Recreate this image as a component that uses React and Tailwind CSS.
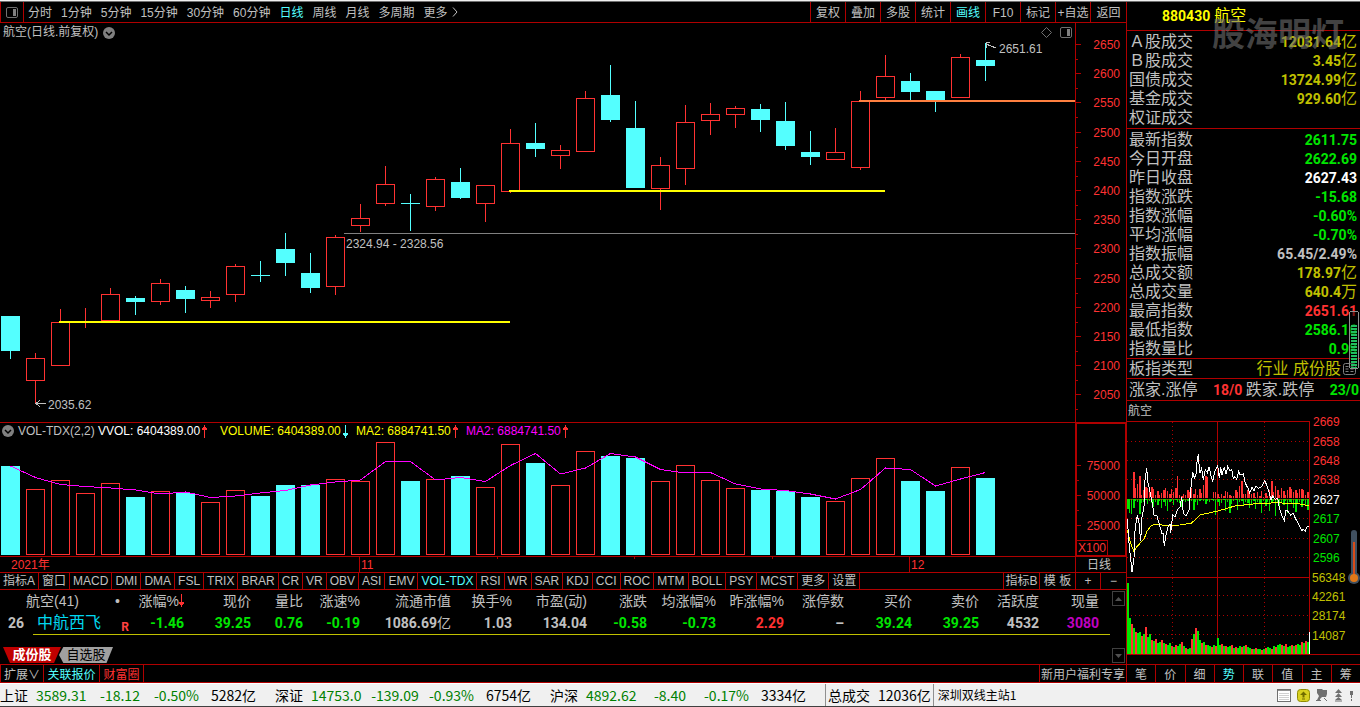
import { useState } from "react"

const periods = ["分时", "1分钟", "5分钟", "15分钟", "30分钟", "60分钟", "日线", "周线", "月线", "多周期", "更多"]
const tools = ["复权", "叠加", "多股", "统计", "画线", "F10", "标记", "+自选", "返回"]
const indicators = ["指标A", "窗口", "MACD", "DMI", "DMA", "FSL", "TRIX", "BRAR", "CR", "VR", "OBV", "ASI", "EMV", "VOL-TDX", "RSI", "WR", "SAR", "KDJ", "CCI", "ROC", "MTM", "BOLL", "PSY", "MCST", "更多", "设置"]
const sideTabs = ["笔", "价", "细", "势", "联", "值", "主", "筹"]

// [up, high, open/close top, open/close bottom, low, volume top]
const candles = [
  [0, 316, 316, 351, 359, 466],
  [1, 353, 358, 381, 403, 489],
  [1, 309, 322, 366, 366, 480],
  [1, 308, 321, 323, 328, 493],
  [1, 288, 294, 321, 321, 483],
  [0, 296, 298, 302, 315, 497],
  [1, 279, 283, 302, 305, 491],
  [0, 286, 290, 299, 313, 493],
  [1, 291, 297, 301, 308, 502],
  [1, 264, 266, 295, 302, 490],
  [0, 261, 275, 276, 282, 496],
  [0, 233, 249, 263, 276, 485],
  [0, 253, 273, 288, 293, 485],
  [1, 235, 237, 287, 295, 479],
  [1, 204, 218, 226, 232, 481],
  [1, 166, 184, 204, 206, 442],
  [0, 194, 203, 204, 231, 481],
  [1, 177, 179, 207, 211, 479],
  [0, 168, 182, 198, 199, 476],
  [1, 185, 185, 204, 222, 487],
  [1, 129, 143, 192, 193, 444],
  [0, 123, 143, 149, 157, 463],
  [1, 145, 150, 156, 169, 485],
  [1, 91, 98, 152, 152, 451],
  [0, 65, 95, 120, 122, 456],
  [0, 101, 128, 188, 188, 458],
  [1, 157, 165, 189, 210, 481],
  [1, 105, 122, 169, 185, 465],
  [1, 103, 114, 121, 135, 480],
  [1, 106, 108, 115, 128, 488],
  [0, 104, 109, 120, 132, 490],
  [0, 102, 121, 146, 150, 491],
  [0, 131, 152, 157, 165, 497],
  [1, 128, 152, 160, 160, 501],
  [1, 91, 101, 168, 170, 478],
  [1, 55, 76, 98, 100, 458],
  [0, 73, 81, 92, 100, 481],
  [0, 91, 91, 100, 112, 491],
  [1, 54, 57, 98, 98, 467],
  [0, 43, 60, 66, 81, 478],
]

const turnover = [
  ["Ａ股成交", "12031.64", "亿"],
  ["Ｂ股成交", "3.45", "亿"],
  ["国债成交", "13724.99", "亿"],
  ["基金成交", "929.60", "亿"],
  ["权证成交", "", ""],
]
const green = "text-[#00e600]"
const red = "text-[#ff3232]"
const olive = "text-[#c0c000]"
const silver = "text-[#c0c0c0]"
const quotes = [
  ["最新指数", "2611.75", "", green],
  ["今日开盘", "2622.69", "", green],
  ["昨日收盘", "2627.43", "", "text-white"],
  ["指数涨跌", "-15.68", "", green],
  ["指数涨幅", "-0.60%", "", green],
  ["平均涨幅", "-0.70%", "", green],
  ["指数振幅", "65.45/2.49%", "", silver],
  ["总成交额", "178.97", "亿", olive],
  ["总成交量", "640.4", "万", olive],
  ["最高指数", "2651.61", "", red],
  ["最低指数", "2586.16", "", green],
  ["指数量比", "0.98", "", green],
]

const columns = [
  ["涨幅%", "-1.46", green, "w-[51px]"],
  ["现价", "39.25", green, "w-[67px]"],
  ["量比", "0.76", green, "w-[52px]"],
  ["涨速%", "-0.19", green, "w-[57px]"],
  ["流通市值", "1086.69", silver, "w-[91px]"],
  ["换手%", "1.03", silver, "w-[61px]"],
  ["市盈(动)", "134.04", silver, "w-[75px]"],
  ["涨跌", "-0.58", green, "w-[60px]"],
  ["均涨幅%", "-0.73", green, "w-[69px]"],
  ["昨涨幅%", "2.29", red, "w-[68px]"],
  ["涨停数", "–", silver, "w-[60px]"],
  ["买价", "39.24", green, "w-[68px]"],
  ["卖价", "39.25", green, "w-[67px]"],
  ["活跃度", "4532", silver, "w-[60px]"],
  ["现量", "3080", "text-[#c000c0]", "w-[60px]"],
]

const indexes = [
  ["上证", "3589.31", "-18.12", "-0.50%", "5282亿"],
  ["深证", "14753.0", "-139.09", "-0.93%", "6754亿"],
  ["沪深", "4892.62", "-8.40", "-0.17%", "3334亿"],
]

// intraday data, one entry every two pixels
const ups = [0, 0, 0, 26, 10, 14, 22, 3, 8, 11, 10, 9, 11, 9, 3, 7, 3, 5, 8, 10, 7, 4, 9, 6, 10, 22, 3, 2, 4, 3, 8, 6, 10, 4, 9, 3, 9, 5, 13, 22, 21, 0, 0, 6, 6, 4, 1, 4, 2, 7, 6, 3, 2, 2, 8, 6, 12, 17, 4, 4, 8, 5, 4, 5, 1, 6, 2, 7, 1, 5, 2, 8, 17, 6, 12, 8, 3, 10, 7, 3, 8, 11, 9, 6, 8, 5, 9, 9, 8, 3, 6]
const downs = [10, 14, 15, 9, 2, 3, 15, 4, 3, 1, 5, 2, 4, 8, 3, 6, 2, 9, 3, 7, 12, 3, 2, 6, 1, 3, 4, 8, 2, 3, 2, 5, 2, 11, 3, 6, 2, 1, 2, 5, 2, 3, 1, 2, 16, 3, 7, 4, 1, 12, 3, 14, 5, 2, 1, 11, 3, 2, 7, 3, 4, 9, 5, 2, 10, 3, 5, 14, 2, 7, 3, 12, 4, 2, 17, 3, 8, 3, 6, 2, 14, 3, 5, 9, 13, 4, 3, 8, 2, 6, 11]
const deals = [71, 36, 30, 26, 22, 21, 22, 18, 20, 27, 17, 20, 14, 13, 15, 11, 12, 14, 11, 10, 9, 11, 8, 7, 9, 8, 10, 12, 8, 6, 5, 6, 15, 20, 26, 23, 14, 11, 12, 9, 9, 8, 7, 9, 8, 16, 9, 10, 8, 8, 7, 8, 9, 6, 7, 6, 8, 7, 8, 9, 7, 6, 5, 5, 6, 5, 5, 4, 5, 6, 7, 6, 5, 8, 7, 9, 10, 9, 8, 10, 7, 8, 9, 8, 9, 10, 9, 12, 11, 13, 12]
const priceLine = "22,358 25,400 28,440 31,465 36,515 42,475 43,410 47,375 52,345 57,370 62,422 66,350 72,320 75,240 80,205 84,250 88,265 93,290 97,310 102,345 110,345 114,360 118,372 126,402 129,400 133,437 137,410 144,380 150,372 152,400 158,345 165,350 172,330 180,322 185,290 190,340 198,347 207,330 213,260 218,215 223,235 228,222 231,185 235,163 239,220 245,205 250,240 256,210 262,218 268,200 272,225 278,243 284,215 293,198 298,235 302,202 306,225 313,200 318,222 323,200 330,212 335,208 340,235 345,230 350,238 356,215 361,225 370,222 376,250 384,265 389,278 396,262 402,272 408,258 415,265 425,260 434,242 440,255 447,275 453,300 458,288 465,298 473,295 478,325 485,345 493,362 498,330 505,335 512,345 520,340 526,355 535,370 545,392 550,388 556,393 561,380 567,378"
const averageLine = "22,390 32,430 42,455 50,440 60,430 72,418 80,395 92,378 105,373 135,376 180,375 213,370 225,360 240,345 293,333 345,318 400,312 470,308 540,312 567,317"

const Chevron = () => (
  <svg className="size-3 shrink-0" viewBox="0 0 12 12">
    <circle cx="6" cy="6" r="6" fill="#808080" />
    <path d="M3 5l3 3 3-3" fill="none" stroke="#000" strokeWidth="1.5" />
  </svg>
)

const PanelIcon = () => (
  <svg className="w-3 h-[11px] shrink-0" viewBox="0 0 12 11">
    <rect x=".5" y=".5" width="11" height="10" rx="1.5" fill="none" stroke="#707070" />
    <rect x="7" y="2" width="3" height="7" fill="#808080" />
  </svg>
)

const Arrow = ({ className }) => (
  <svg className={`w-[5px] h-[13px] shrink-0 ${className}`} viewBox="0 0 5 13" fill="currentColor" shapeRendering="crispEdges">
    <path d="M2 0h1v13H2zM1 2h3v1h1v2H0V3h1z" />
  </svg>
)

const PriceChart = () => (
  <svg className="block w-full h-[399px] text-xs" shapeRendering="crispEdges">
    <g transform="translate(0 -23)">
      {candles.map(([up, high, top, bottom, low], i) => (
        <g key={i} transform={`translate(${i * 25} 0)`} fill={up ? "#ff3232" : "#54ffff"}>
          {top > high && <rect x="10" y={high} width="1" height={top - high} />}
          {low > bottom && <rect x="10" y={bottom} width="1" height={low - bottom} />}
          {up ? <rect x="1.5" y={top + 0.5} width="18" height={bottom - top - 1} fill="none" stroke="#ff3232" /> : <rect x="1" y={top} width="19" height={bottom - top} />}
        </g>
      ))}
      <rect x="59" y="321" width="451" height="2" fill="#ffff00" />
      <rect x="509" y="190" width="376" height="2" fill="#ffff00" />
      <rect x="859" y="100" width="100%" height="2" fill="#ff8040" />
      <rect x="344" y="233" width="100%" height="1" fill="#808080" />
      <g fill="none" stroke="#c0c0c0">
        <path d="M36 403.5h10M40 400.500l-4 3 4 3" />
        <path d="M986 44l10 4M990 42.500h-4v5" />
      </g>
      <g fill="#c0c0c0">
        <text x="346" y="248">2324.94 - 2328.56</text>
        <text x="48" y="409">2035.62</text>
        <text x="999" y="53">2651.61</text>
      </g>
    </g>
  </svg>
)

const PriceAxis = () => (
  <svg className="block w-full h-[399px] text-xs" shapeRendering="crispEdges">
    {Array.from({ length: 13 }, (_, i) => {
      const y = Math.round(21 + i * 29.2)
      return (
        <g key={i} fill="#b00000">
          <rect y={y} width="5" height="1" />
          <rect y={y + 15} width="2" height="1" />
          <text x="44" y={y + 5} textAnchor="end" fill="#ff3232">
            {2650 - i * 50}
          </text>
        </g>
      )
    })}
  </svg>
)

const VolumeChart = () => (
  <svg className="block w-full h-[117px]" shapeRendering="crispEdges">
    <g transform="translate(0 -439)">
      {candles.map(([up, , , , , top], i) =>
        up ? (
          <rect key={i} x={i * 25 + 1.5} y={top + 0.5} width="18" height={554 - top} fill="none" stroke="#ff3232" />
        ) : (
          <rect key={i} x={i * 25 + 1} y={top} width="19" height={555 - top} fill="#54ffff" />
        )
      )}
      <polyline points={candles.map((c, i) => `${i * 25 + 10.5},${(c[5] + candles[Math.max(i - 1, 0)][5]) / 2}`).join(" ")} fill="none" stroke="#ff00ff" />
    </g>
  </svg>
)

const VolumeAxis = () => (
  <div className="relative h-[133px] border border-[#b00000]">
    <svg className="block w-full h-[131px] text-xs" shapeRendering="crispEdges">
      {[75000, 50000, 25000].map((v, i) => (
        <g key={v} fill="#b00000">
          <rect y={41 + i * 30} width="4" height="1" />
          {i < 2 && <rect y={56 + i * 30} width="2" height="1" />}
          <text x="43" y={46 + i * 30} textAnchor="end" fill="#ff3232">
            {v}
          </text>
        </g>
      ))}
    </svg>
    <span className="absolute bottom-0 left-0 h-[15px] leading-[14px] border-t border-r border-[#b00000] px-px text-[#ff3232]">X100</span>
  </div>
)

const scale = (points) =>
  points
    .split(" ")
    .map((p) => p.split(",").map((n) => Number(n) / 3))
    .map(([x, y]) => `${(x - 7).toFixed(1)},${(y - 21).toFixed(1)}`)
    .join(" ")

const IntradayChart = () => {
  const labels = [
    ["2669", 0, "#ff3232"],
    ["2658", 20, "#ff3232"],
    ["2648", 39, "#ff3232"],
    ["2638", 58, "#ff3232"],
    ["2627", 78, "#ffffff"],
    ["2617", 97, "#00e600"],
    ["2607", 117, "#00e600"],
    ["2596", 136, "#00e600"],
    ["56348", 156, "#c0c000"],
    ["42261", 175, "#c0c000"],
    ["28174", 194, "#c0c000"],
    ["14087", 214, "#c0c000"],
  ]
  return (
    <svg className="block w-full h-[243px] text-xs overflow-visible" shapeRendering="crispEdges">
      <g fill="none" stroke="#b00000">
        <path d="M0 .5h182.500v233M90.500 .5v233M0 78.500h182M0 156.500h182M0 233.500h233" />
        <path strokeDasharray="1 3" d="M45.500 .5v233M137.500 .5v233M0 20.500h182M0 39.500h182M0 58.500h182M0 97.500h182M0 117.500h182M0 136.500h182M0 174.500h182M0 194.500h182M0 213.500h182" />
      </g>
      {ups.map((h, i) => (
        <rect key={i} x={i * 2} y={77 - h} width={i % 3 ? 1 : 2} height={h} fill="#ff3232" />
      ))}
      {downs.map((h, i) => (
        <rect key={i} x={i * 2} y="78" width={i % 3 ? 1 : 2} height={h} fill="#00e600" />
      ))}
      {deals.map((h, i) => (
        <rect key={i} x={i * 2} y={233 - h} width="2" height={h} fill={(i * 7) % 5 < 3 ? "#00e600" : "#ff3232"} />
      ))}
      <rect x="182" y="211" width="1" height="22" fill="#fff" />
      <polyline points={scale(averageLine)} fill="none" stroke="#ffff00" />
      <polyline points={scale(priceLine)} fill="none" stroke="#fff" />
      {labels.map(([text, y, color], i) => (
        <text key={text} x={i < 8 ? 186 : 185} y={y + 5} fill={color}>
          {text}
        </text>
      ))}
    </svg>
  )
}

const QuoteRow = ({ label, value, unit, color }) => (
  <div className="flex items-center justify-between h-[19px] pl-0.5 pr-[3px]">
    <dt className="text-base leading-[19px]">{label}</dt>
    <dd className={`flex items-center ${color}`}>
      <span className="font-['Roboto',sans-serif] text-sm font-bold">{value}</span>
      <span className="text-base leading-[19px]">{unit}</span>
    </dd>
  </div>
)

const Sidebar = () => {
  const [tab, setTab] = useState("势")
  return (
    <aside className="relative w-[234px] shrink-0 border-l border-[#b00000] flex flex-col">
      <h1 className="flex items-center gap-1 h-[29px] pl-[35px] border-b border-[#b00000] text-[#ffff00] text-base">
        <span className="font-['Roboto',sans-serif] text-sm font-bold">880430</span>
        航空
      </h1>
      <dl className="h-[98px] pt-px border-b border-[#b00000]">
        {turnover.map(([label, value, unit]) => (
          <QuoteRow key={label} label={label} value={value} unit={unit} color={olive} />
        ))}
      </dl>
      <dl className="h-[230px] pt-px border-b border-[#b00000]">
        {quotes.map(([label, value, unit, color]) => (
          <QuoteRow key={label} label={label} value={value} unit={unit} color={color} />
        ))}
      </dl>
      <div className="flex items-center h-5 pl-0.5 pr-1 border-b border-[#b00000] text-base leading-[19px]">
        板指类型
        <span className="ml-auto mr-0.5 text-[#c0c000]">行业 成份股</span>
        <svg className="w-[13px] h-3" viewBox="0 0 13 12" fill="none" stroke="#808080">
          <rect x=".5" y=".5" width="12" height="11" rx="2" />
          <path d="M2.500 3.500h3M2.500 6h3M2.500 8.500h3M7.500 3.500h3M7.500 6h3M7.500 8.500h3" />
        </svg>
      </div>
      <div className="flex items-center justify-between h-[22px] pl-0.5 pr-px border-b border-[#b00000] text-base leading-[20px]">
        涨家.涨停
        <b className="ml-3 font-['Roboto',sans-serif] text-sm text-[#ff3232]">18/0</b>
        跌家.跌停
        <b className="ml-3 font-['Roboto',sans-serif] text-sm text-[#00e600]">23/0</b>
      </div>
      <h2 className="h-5 leading-[21px] pl-px">航空</h2>
      <IntradayChart />
      <nav className="flex h-[19px] border-y border-[#b00000]">
        {sideTabs.map((t) => (
          <button
            key={t}
            type="button"
            onClick={() => setTab(t)}
            className={t === tab ? "flex-1 pt-px leading-[18px] border-r last:border-r-0 border-[#b00000] text-[#54ffff]" : "flex-1 pt-px leading-[18px] border-r last:border-r-0 border-[#b00000]"}
          >
            {t}
          </button>
        ))}
      </nav>
      <span className="absolute right-4 top-[9px] font-bold text-[33px] leading-[48px] text-[#707070]/60 pointer-events-none">股海明灯</span>
      <svg className="absolute right-px top-[309px] w-[11px] h-[59px]" viewBox="0 0 11 59" shapeRendering="crispEdges">
        <rect x="1.500" y=".5" width="9" height="57" rx="2" fill="#000" fillOpacity=".5" stroke="#909090" />
        <path d="M6 14v43" stroke="#20c060" strokeWidth="6" strokeDasharray="2 1" />
      </svg>
      <svg className="absolute right-0 top-[527px] w-3 h-[56px]" viewBox="0 0 12 56">
        <path d="M6 4v44" stroke="#405060" strokeWidth="6" strokeLinecap="round" />
        <circle cx="6" cy="49" r="6" fill="#405060" />
        <path d="M6 13v36" stroke="#d84c18" strokeWidth="2" />
        <circle cx="6" cy="49" r="4" fill="#e07818" />
      </svg>
    </aside>
  )
}

const StockTable = () => (
  <table className="w-full table-fixed">
    <colgroup>
      <col className="w-[33px]" />
      <col className="w-[69px]" />
      <col className="w-[31px]" />
      {columns.map(([name, , , width]) => (
        <col key={name} className={width} />
      ))}
      <col />
    </colgroup>
    <thead>
      <tr className="h-[21px] text-sm leading-[20px] whitespace-nowrap">
        <th colSpan="2" className="font-normal text-left pl-[26px]">
          航空(41)
        </th>
        <th className="font-normal">•</th>
        {columns.map(([name], i) => (
          <th key={name} className="font-normal">
            <div className="flex justify-end items-center">
              {name}
              {i === 0 && <Arrow className="text-[#ff3232] rotate-180" />}
            </div>
          </th>
        ))}
        <th />
      </tr>
    </thead>
    <tbody>
      <tr className="h-[23px] font-['Roboto','Noto_Sans_CJK_SC',sans-serif] text-sm leading-[20px] font-bold text-right">
        <td className="text-left pl-2 pt-px">26</td>
        <td className="border-b border-[#c0c000] text-left pl-1 pt-px text-base leading-[20px] font-normal text-[#00d8f0]">
          <a href="#zhxf">中航西飞</a>
        </td>
        <td className="border-b border-[#c0c000] text-xs align-bottom leading-[14px] text-[#ff4040] pr-1">R</td>
        {columns.map(([name, value, color]) => (
          <td key={name} className={`border-b border-[#c0c000] pt-px whitespace-nowrap ${color}`}>
            {value}
            {name === "流通市值" && <span className="font-normal">亿</span>}
          </td>
        ))}
        <td className="border-b border-[#c0c000]" />
      </tr>
    </tbody>
  </table>
)

const StatusBar = () => (
  <footer className="flex items-center h-6 border-t border-white border-b border-b-[#404040] bg-[#f0f0f0] text-black font-['Noto_Sans_CJK_SC',sans-serif] text-sm leading-[22px] whitespace-nowrap">
    {indexes.map(([name, value, change, percent, amount]) => (
      <div key={name} className="grid grid-cols-[36px_50px_68px_44px_58px] w-[275px] shrink-0 text-[#008000]">
        <span className="text-black">{name}</span>
        <span>{value}</span>
        <span className="text-center">{change}</span>
        <span>{percent}</span>
        <span className="text-black text-right">{amount}</span>
      </div>
    ))}
    <div className="flex gap-2 border-l border-[#909090] pl-0.5">
      <span>总成交</span>
      <span>12036亿</span>
    </div>
    <span className="border-l border-[#909090] pl-1 ml-0.5 text-xs leading-[22px]">深圳双线主站1</span>
    <div className="flex items-center gap-[6px] ml-auto pr-[6px]">
      <svg className="w-[14px] h-[13px]" viewBox="0 0 14 13" shapeRendering="crispEdges">
        <rect x=".5" y=".5" width="13" height="12" fill="#fff" stroke="#707070" />
        <path d="M1 1.500h12" stroke="#909090" />
        <path d="M2 4.500h10M2 6.500h10M2 8.500h10M2 10.500h10" stroke="#d0d0d0" />
      </svg>
      <svg className="w-[13px] h-[13px]" viewBox="0 0 13 13">
        <rect x=".5" y=".5" width="12" height="12" rx="3" fill="#d8d020" stroke="#908c00" />
        <path d="M6.500 2.500L10 6H7.500v2.500h-2V6H3z" fill="#706c00" />
        <path d="M5 10h3" stroke="#706c00" />
      </svg>
      <svg className="w-3 h-[13px]" viewBox="0 0 12 13" fill="#707070">
        <path d="M1 0h5l1 1h4v4l-1 3H6L4 10v1h1v1H0v-1h1l2-4-2-3z" />
        <path d="M8 9l3 3" stroke="#707070" />
      </svg>
      <svg className="w-[9px] h-[13px]" viewBox="0 0 9 13" fill="#707070">
        <path d="M4.500 0L8 4H1zM4.500 4L8 8H1zM4.500 8L8 11H1zM1 11.500h7v1H1z" />
      </svg>
      <svg className="w-[5px] h-[13px]" viewBox="0 0 5 13" fill="#707070">
        <path d="M1 2h3v4H3v3H2V6H1zM2 10h1v2H2z" />
      </svg>
    </div>
  </footer>
)

const App = () => {
  const [period, setPeriod] = useState("日线")
  const [indicator, setIndicator] = useState("VOL-TDX")
  return (
    <div className="min-h-screen flex flex-col bg-black text-[#c0c0c0] font-['Liberation_Sans','Noto_Sans_CJK_SC',sans-serif] text-xs">
      <div className="h-0.5 bg-[#f0f0f0] border-b border-[#707070]" />
      <div className="flex flex-1">
        <main className="flex-1 min-w-0 flex flex-col">
          <div className="flex h-[21px] border-b border-[#b00000] leading-[20px] whitespace-nowrap">
            <button type="button" aria-label="侧栏" className="flex items-center justify-center w-6 border-x border-[#b00000]">
              <PanelIcon />
            </button>
            <nav className="flex gap-[9px] pl-1">
              {periods.map((p) => (
                <button key={p} type="button" onClick={() => setPeriod(p)} className={p === period ? "pt-px text-[#54ffff]" : "pt-px"}>
                  {p}
                </button>
              ))}
            </nav>
            <svg className="w-[6px] h-[10px] mt-[5px] ml-1" viewBox="0 0 6 10" fill="none" stroke="#c0c0c0">
              <path d="M1 .5L5 5 1 9.500" />
            </svg>
            <div className="flex ml-auto">
              {tools.map((t) => (
                <button key={t} type="button" className={t === "画线" ? "pt-px w-[35px] border-l border-[#b00000] text-[#54ffff]" : "pt-px w-[35px] last:w-9 border-l border-[#b00000]"}>
                  {t}
                </button>
              ))}
            </div>
          </div>

          <section className="grid grid-cols-[1fr_51px]">
            <div className="relative min-w-0 overflow-hidden">
              <PriceChart />
              <div className="absolute top-0 left-[3px] flex items-center gap-[5px] leading-[19px]">
                航空(日线.前复权)
                <Chevron />
              </div>
              <div className="absolute top-1 right-[3px] flex items-center gap-2">
                <svg className="size-[11px]" viewBox="0 0 11 11" fill="none" stroke="#707070">
                  <path d="M5.500 .5l5 5-5 5-5-5z" />
                </svg>
                <PanelIcon />
              </div>
            </div>
            <div className="border-l border-[#b00000]">
              <PriceAxis />
            </div>
          </section>

          <section className="grid grid-cols-[1fr_51px] border-t border-[#b00000]">
            <div className="min-w-0 overflow-hidden">
              <div className="flex items-center h-4 pl-0.5 whitespace-nowrap">
                <Chevron />
                <span className="ml-1 w-20">VOL-TDX(2,2)</span>
                <span className="flex items-center gap-0.5 w-[122px] text-white">
                  VVOL: 6404389.00
                  <Arrow className="text-[#ff3232]" />
                </span>
                <span className="flex items-center gap-0.5 w-[136px] text-[#ffff00]">
                  VOLUME: 6404389.00
                  <Arrow className="text-[#54ffff] rotate-180" />
                </span>
                <span className="flex items-center gap-0.5 w-[110px] text-[#ffff00]">
                  MA2: 6884741.50
                  <Arrow className="text-[#ff3232]" />
                </span>
                <span className="flex items-center gap-0.5 text-[#ff00ff]">
                  MA2: 6884741.50
                  <Arrow className="text-[#ff3232]" />
                </span>
              </div>
              <VolumeChart />
            </div>
            <div className="border-l border-[#b00000]">
              <VolumeAxis />
            </div>
          </section>

          <div className="grid grid-cols-[1fr_51px] border-t border-[#b00000] leading-[16px]">
            <svg className="block w-full h-[15px]" fill="#b00000" shapeRendering="crispEdges">
              <rect x="359" width="1" height="15" />
              <rect x="909" width="1" height="15" />
              <rect x="497" width="1" height="2" />
              <rect x="634" width="1" height="2" />
              <rect x="772" width="1" height="2" />
              <g fill="#ff3232">
                <text x="11" y="12">2021年</text>
                <text x="361" y="12">11</text>
                <text x="911" y="12">12</text>
              </g>
            </svg>
            <span className="h-[15px] border-l border-[#b00000] pr-1 text-center">日线</span>
          </div>

          <div className="flex border-t border-[#b00000] h-[17px] leading-[16px] whitespace-nowrap">
            {indicators.map((name) => (
              <button
                key={name}
                type="button"
                onClick={() => setIndicator(name)}
                className={name === indicator ? "px-[3px] border-r border-[#b00000] text-[#54ffff]" : "px-[3px] border-r border-[#b00000]"}
              >
                {name}
              </button>
            ))}
            <button type="button" className="ml-auto w-9 border-l border-[#b00000]">指标B</button>
            <button type="button" className="w-9 border-l border-[#b00000]">模 板</button>
            <button type="button" className="w-[25px] border-l border-[#b00000]">+</button>
            <button type="button" className="w-[26px] border-l border-[#b00000]">−</button>
          </div>

          <section className="flex flex-1 border-t border-[#b00000]">
            <div className="flex-1 min-w-0 flex flex-col">
              <StockTable />
              <div className="flex mt-auto pl-[3px] pb-px text-black text-[13px]">
                <button type="button" className="w-[58px] h-4 leading-[16px] bg-[#c00000] text-white font-bold [clip-path:polygon(0_0,100%_0,88%_100%,12%_100%)]">成份股</button>
                <button type="button" className="w-[54px] h-4 leading-[16px] -ml-0.5 bg-[#a0a0a0] [clip-path:polygon(8%_0,100%_0,88%_100%,8%_100%,0_50%)]">自选股</button>
              </div>
            </div>
            <div className="flex flex-col justify-between w-4 pl-0.5 py-px">
              <button type="button" aria-label="上" className="flex items-center justify-center w-[13px] h-[15px] border border-[#404040]">
                <svg className="w-[7px] h-1" viewBox="0 0 7 4" fill="#505050"><path d="M3.500 0L7 4H0z" /></svg>
              </button>
              <button type="button" aria-label="下" className="flex items-center justify-center w-[13px] h-[15px] border border-[#404040]">
                <svg className="w-[7px] h-1" viewBox="0 0 7 4" fill="#505050"><path d="M3.500 4L7 0H0z" /></svg>
              </button>
            </div>
          </section>

          <div className="flex h-[19px] border-y border-[#b00000] leading-[18px] whitespace-nowrap">
            <button type="button" className="pt-px w-11 border-x border-[#b00000]">扩展∨</button>
            <button type="button" className="pt-px w-14 border-r border-[#b00000] text-[#54ffff]">关联报价</button>
            <button type="button" className="pt-px w-11 border-r border-[#b00000] text-[#ff3232]">财富圈</button>
            <button type="button" className="pt-px ml-auto w-[87px] border-l border-[#b00000]">新用户福利专享</button>
          </div>
        </main>
        <Sidebar />
      </div>
      <StatusBar />
    </div>
  )
}

export default App
